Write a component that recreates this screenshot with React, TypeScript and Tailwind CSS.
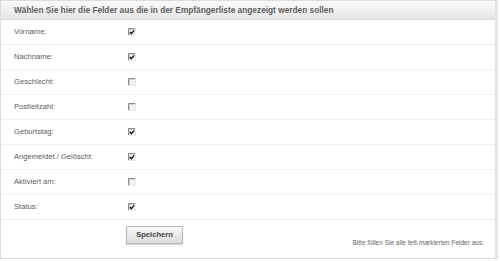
import React from 'react';

const fields = [
  { label: 'Vorname:', checked: true },
  { label: 'Nachname:', checked: true },
  { label: 'Geschlecht:', checked: false },
  { label: 'Postleitzahl:', checked: false },
  { label: 'Geburtstag:', checked: true },
  { label: 'Angemeldet / Gelöscht:', checked: true },
  { label: 'Aktiviert am:', checked: false },
  { label: 'Status:', checked: true },
];

function Box({ checked }: { checked: boolean }) {
  return (
    <svg width="8" height="8" viewBox="0 0 8 8" className="block">
      <rect x="0" y="0" width="8" height="8" fill="#f4f4f4" />
      <path d="M0.5 8V0.5H8" fill="none" stroke="#8c8c8c" strokeWidth="1" />
      <path d="M1.5 7V1.5H7" fill="none" stroke="#cfcfcf" strokeWidth="1" />
      <path d="M0 7.5H7.5V0" fill="none" stroke="#e8e8e8" strokeWidth="1" />
      {checked && <path d="M2 4L3.3 5.6L6.2 2.4" fill="none" stroke="#111" strokeWidth="1.4" />}
    </svg>
  );
}

export default function App() {
  return (
    <div className="w-[500px] h-[261px] bg-white font-['Liberation_Sans',Arial,sans-serif]">
      <div className="w-[498px] h-[259px] border border-[#dcdcdc] border-r-[3px] border-r-[#e4e4e4] bg-white flex flex-col">
        {/* header */}
        <div className="h-[19px] flex items-center pl-[13px] bg-gradient-to-b from-[#fbfbfb] to-[#e5e5e5] border-b border-[#d8d8d8]">
          <span className="text-[8.3px] font-bold text-[#5f5f5f]">
            Wählen Sie hier die Felder aus die in der Empfängerliste angezeigt werden sollen
          </span>
        </div>

        {fields.map((f) => (
          <div key={f.label} className="h-[25px] flex items-center border-b border-[#f0f0f0]">
            <span className="w-[127px] pl-[13px] text-[7.6px] text-[#5c5c5c]">{f.label}</span>
            <Box checked={f.checked} />
          </div>
        ))}

        <div className="flex-1 flex items-start pt-[6px] pl-[125px] pr-[11px]">
          <button className="w-[57px] h-[18px] border border-[#b9b9b9] bg-gradient-to-b from-[#f9f9f9] to-[#dcdcdc] text-[7.6px] font-bold text-[#444] shadow-[0_1px_1px_rgba(0,0,0,0.15)]">
            Speichern
          </button>
          <span className="ml-auto mt-[12px] text-[6.5px] text-[#666]">
            Bitte füllen Sie alle fett-markierten Felder aus.
          </span>
        </div>
      </div>
    </div>
  );
}
